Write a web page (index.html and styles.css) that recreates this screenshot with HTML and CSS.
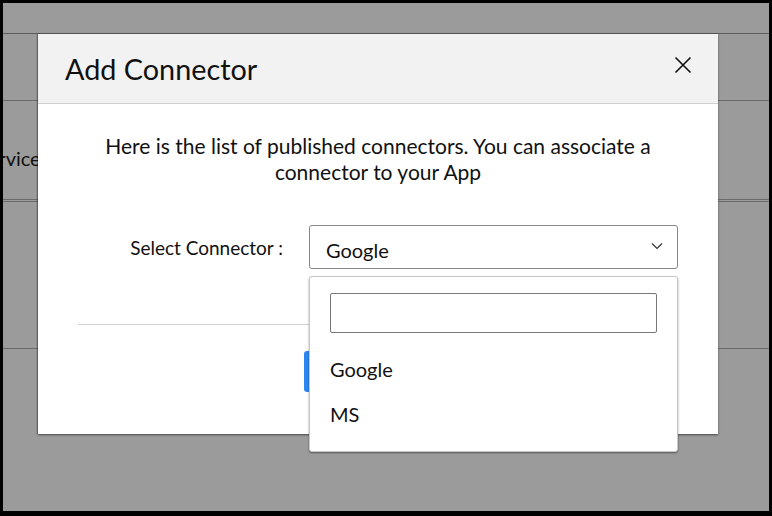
FILE: index.html
```html
<!DOCTYPE html>
<html>
<head>
<meta charset="utf-8">
<link rel="stylesheet" href="styles.css">
</head>
<body>
<div class="screen">
  <div class="bg">
    <div class="bg-top"></div>
    <div class="bg-row bg-row-1"></div>
    <div class="bg-row bg-row-2"><span class="bg-label">Service</span></div>
    <div class="bg-row bg-row-3"></div>
    <div class="bg-row bg-row-4"></div>
  </div>

  <div class="modal">
    <div class="modal-header">
      <h1 class="modal-title">Add Connector</h1>
      <button class="close" aria-label="Close">
        <svg width="18" height="18" viewBox="0 0 18 18"><path d="M1.5 1.5 L16.5 16.5 M16.5 1.5 L1.5 16.5" stroke="#111" stroke-width="1.6" fill="none"/></svg>
      </button>
    </div>
    <div class="modal-body">
      <p class="intro">Here is the list of published connectors. You can associate a connector to your App</p>
      <div class="form-row">
        <label class="form-label">Select Connector :</label>
        <div class="select">
          <span class="select-value">Google</span>
          <svg class="chevron" width="12" height="8" viewBox="0 0 12 8"><path d="M1 1.5 L6 6.5 L11 1.5" stroke="#333" stroke-width="1.2" fill="none"/></svg>
        </div>
      </div>
    </div>
    <div class="modal-footer">
      <button class="btn-primary" aria-label="Associate"></button>
    </div>
  </div>

  <div class="dropdown">
    <div class="search"></div>
    <ul class="options">
      <li class="option">Google</li>
      <li class="option">MS</li>
    </ul>
  </div>
</div>
</body>
</html>
```

FILE: styles.css
```css
* { box-sizing: border-box; }
html, body { margin: 0; padding: 0; }
body {
  background: #000;
  width: 772px;
  height: 516px;
  overflow: hidden;
  font-family: Lato, "Open Sans", sans-serif;
}
.screen {
  position: relative;
  margin: 3px 0 0 3px;
  width: 766px;
  height: 508px;
  background: #9b9b9b;
  overflow: hidden;
}
.bg-top { height: 31px; border-bottom: 1px solid #5a5a5a; }
.bg-row { border-bottom: 1px solid #6a6a6a; }
.bg-row-1 { height: 67px; }
.bg-row-2 { height: 99px; display: flex; align-items: center; padding-top: 16px; }
.bg-row-3 { height: 2px; }
.bg-row-4 { height: 147px; }
.bg-label {
  font-size: 20px;
  color: #111;
  margin-left: -26px;
}

.modal {
  position: absolute;
  left: 35px;
  top: 31px;
  width: 680px;
  height: 400px;
  background: #fff;
  box-shadow: 0 1px 2px rgba(0,0,0,0.5), -1px 0 1px rgba(0,0,0,0.25);
}
.modal-header {
  height: 70px;
  background: #f2f2f2;
  border-bottom: 1px solid #cfcfcf;
  display: flex;
  align-items: center;
  justify-content: space-between;
  padding: 0 26px 0 27px;
}
.modal-title {
  margin: 0;
  font-size: 28.8px;
  font-weight: 400;
  color: #111;
}
.close {
  border: 0;
  background: none;
  padding: 0;
  width: 18px;
  height: 18px;
  margin-top: -7px;
  display: flex;
}
.modal-body {
  padding-top: 29px;
  height: 221px;
  border-bottom: 1px solid #d0d0d0;
  margin: 0 40px;
}
.intro {
  margin: 0 auto;
  width: 600px;
  text-align: center;
  font-size: 21px;
  line-height: 26px;
  color: #111;
}
.form-row {
  display: flex;
  align-items: center;
  margin-top: 40px;
}
.form-label {
  font-size: 19px;
  color: #111;
  width: 231px;
  text-align: right;
  padding-right: 26px;
}
.select {
  width: 369px;
  height: 44px;
  border: 1px solid #888;
  border-radius: 3px;
  display: flex;
  align-items: center;
  justify-content: space-between;
  padding: 5px 14px 0 16px;
}
.select-value { font-size: 20px; color: #111; }
.chevron { margin-top: -8px; }
.modal-footer {
  display: flex;
  justify-content: center;
  padding-top: 26px;
}
.btn-primary {
  width: 148px;
  height: 41px;
  background: #2d86f0;
  border: 0;
  border-radius: 3px;
}

.dropdown {
  position: absolute;
  left: 306px;
  top: 273px;
  width: 369px;
  height: 176px;
  background: #fff;
  border: 1px solid #c8c8c8;
  border-radius: 3px;
  box-shadow: 0 1px 2px rgba(0,0,0,0.45);
  padding: 16px 20px 0;
}
.search {
  height: 40px;
  border: 1px solid #777;
  border-radius: 2px;
}
.options {
  list-style: none;
  margin: 14px 0 0;
  padding: 0;
}
.option {
  font-size: 20px;
  color: #111;
  height: 45px;
  line-height: 45px;
}
```
